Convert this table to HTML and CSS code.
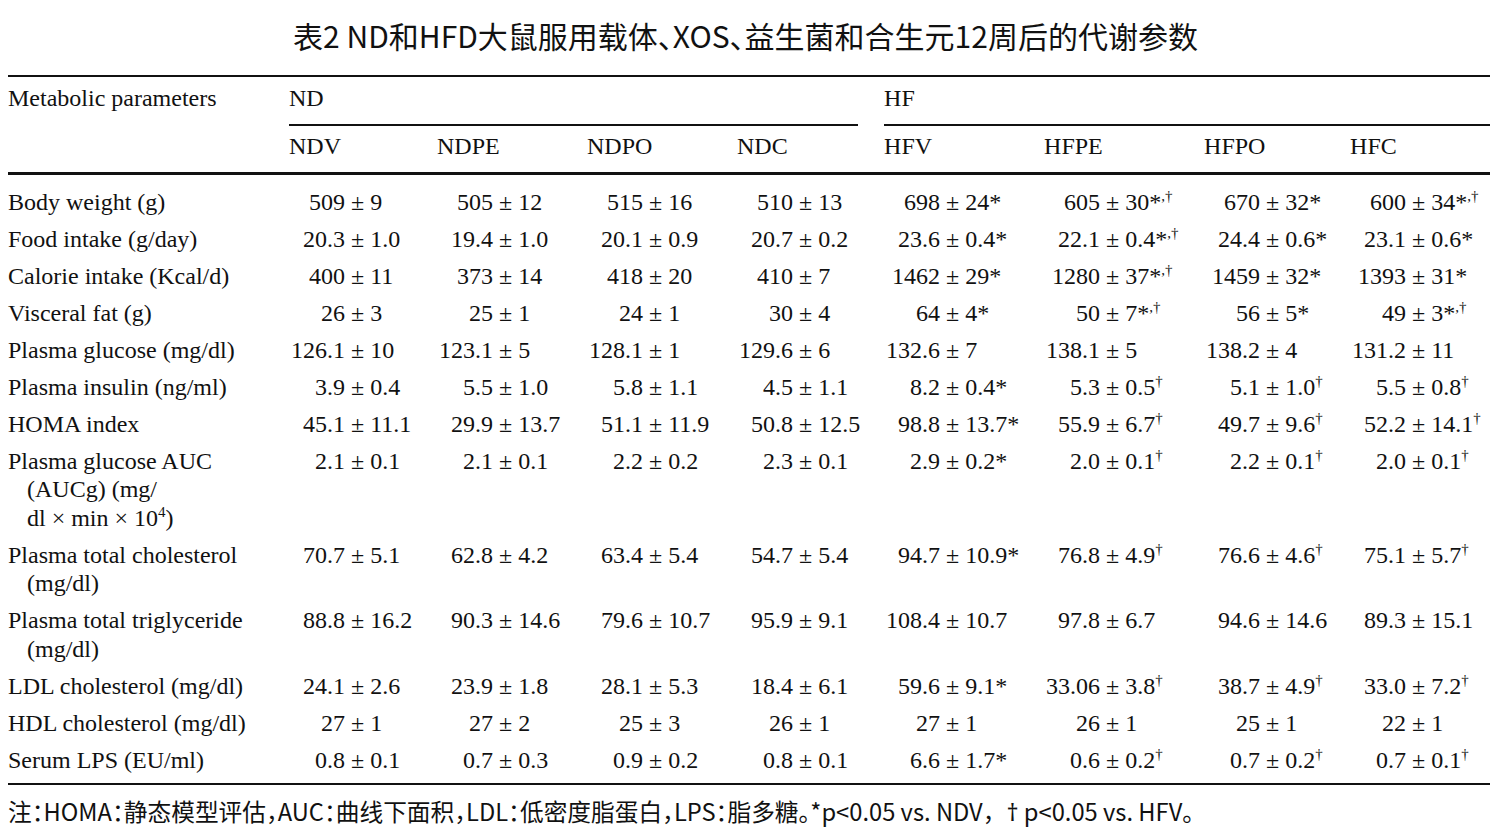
FILE: index.html
```html
<!DOCTYPE html>
<html lang="zh-CN">
<head>
<meta charset="utf-8">
<title>表2 代谢参数</title>
<link rel="stylesheet" href="styles.css">
</head>
<body>
<div class="page">
  <h1 class="title">表2 ND和HFD大鼠服用载体、XOS、益生菌和合生元12周后的代谢参数</h1>
  <table class="data">
    <colgroup>
      <col class="c-label">
      <col class="c-ndv"><col class="c-ndpe"><col class="c-ndpo"><col class="c-ndc">
      <col class="c-hfv"><col class="c-hfpe"><col class="c-hfpo"><col class="c-hfc">
    </colgroup>
    <thead>
      <tr class="h1">
        <th rowspan="2" class="lab-head">Metabolic parameters</th>
        <th colspan="4" class="grp"><div class="grp-label nd">ND</div></th>
        <th colspan="4" class="grp"><div class="grp-label">HF</div></th>
      </tr>
      <tr class="h2">
        <th>NDV</th><th>NDPE</th><th>NDPO</th><th>NDC</th>
        <th>HFV</th><th>HFPE</th><th>HFPO</th><th>HFC</th>
      </tr>
    </thead>
    <tbody>
      <tr>
        <td class="lab">Body weight (g)</td>
        <td><span class="n">509</span> ± 9</td>
        <td><span class="n">505</span> ± 12</td>
        <td><span class="n">515</span> ± 16</td>
        <td><span class="n">510</span> ± 13</td>
        <td><span class="n">698</span> ± 24*</td>
        <td><span class="n">605</span> ± 30*<sup>,†</sup></td>
        <td><span class="n">670</span> ± 32*</td>
        <td><span class="n">600</span> ± 34*<sup>,†</sup></td>
      </tr>
      <tr>
        <td class="lab">Food intake (g/day)</td>
        <td><span class="n">20.3</span> ± 1.0</td>
        <td><span class="n">19.4</span> ± 1.0</td>
        <td><span class="n">20.1</span> ± 0.9</td>
        <td><span class="n">20.7</span> ± 0.2</td>
        <td><span class="n">23.6</span> ± 0.4*</td>
        <td><span class="n">22.1</span> ± 0.4*<sup>,†</sup></td>
        <td><span class="n">24.4</span> ± 0.6*</td>
        <td><span class="n">23.1</span> ± 0.6*</td>
      </tr>
      <tr>
        <td class="lab">Calorie intake (Kcal/d)</td>
        <td><span class="n">400</span> ± 11</td>
        <td><span class="n">373</span> ± 14</td>
        <td><span class="n">418</span> ± 20</td>
        <td><span class="n">410</span> ± 7</td>
        <td><span class="n">1462</span> ± 29*</td>
        <td><span class="n">1280</span> ± 37*<sup>,†</sup></td>
        <td><span class="n">1459</span> ± 32*</td>
        <td><span class="n">1393</span> ± 31*</td>
      </tr>
      <tr>
        <td class="lab">Visceral fat (g)</td>
        <td><span class="n">26</span> ± 3</td>
        <td><span class="n">25</span> ± 1</td>
        <td><span class="n">24</span> ± 1</td>
        <td><span class="n">30</span> ± 4</td>
        <td><span class="n">64</span> ± 4*</td>
        <td><span class="n">50</span> ± 7*<sup>,†</sup></td>
        <td><span class="n">56</span> ± 5*</td>
        <td><span class="n">49</span> ± 3*<sup>,†</sup></td>
      </tr>
      <tr>
        <td class="lab">Plasma glucose (mg/dl)</td>
        <td><span class="n">126.1</span> ± 10</td>
        <td><span class="n">123.1</span> ± 5</td>
        <td><span class="n">128.1</span> ± 1</td>
        <td><span class="n">129.6</span> ± 6</td>
        <td><span class="n">132.6</span> ± 7</td>
        <td><span class="n">138.1</span> ± 5</td>
        <td><span class="n">138.2</span> ± 4</td>
        <td><span class="n">131.2</span> ± 11</td>
      </tr>
      <tr>
        <td class="lab">Plasma insulin (ng/ml)</td>
        <td><span class="n">3.9</span> ± 0.4</td>
        <td><span class="n">5.5</span> ± 1.0</td>
        <td><span class="n">5.8</span> ± 1.1</td>
        <td><span class="n">4.5</span> ± 1.1</td>
        <td><span class="n">8.2</span> ± 0.4*</td>
        <td><span class="n">5.3</span> ± 0.5<sup>†</sup></td>
        <td><span class="n">5.1</span> ± 1.0<sup>†</sup></td>
        <td><span class="n">5.5</span> ± 0.8<sup>†</sup></td>
      </tr>
      <tr>
        <td class="lab">HOMA index</td>
        <td><span class="n">45.1</span> ± 11.1</td>
        <td><span class="n">29.9</span> ± 13.7</td>
        <td><span class="n">51.1</span> ± 11.9</td>
        <td><span class="n">50.8</span> ± 12.5</td>
        <td><span class="n">98.8</span> ± 13.7*</td>
        <td><span class="n">55.9</span> ± 6.7<sup>†</sup></td>
        <td><span class="n">49.7</span> ± 9.6<sup>†</sup></td>
        <td><span class="n">52.2</span> ± 14.1<sup>†</sup></td>
      </tr>
      <tr>
        <td class="lab">Plasma glucose AUC<br>(AUCg) (mg/<br>dl × min × 10<sup>4</sup>)</td>
        <td><span class="n">2.1</span> ± 0.1</td>
        <td><span class="n">2.1</span> ± 0.1</td>
        <td><span class="n">2.2</span> ± 0.2</td>
        <td><span class="n">2.3</span> ± 0.1</td>
        <td><span class="n">2.9</span> ± 0.2*</td>
        <td><span class="n">2.0</span> ± 0.1<sup>†</sup></td>
        <td><span class="n">2.2</span> ± 0.1<sup>†</sup></td>
        <td><span class="n">2.0</span> ± 0.1<sup>†</sup></td>
      </tr>
      <tr>
        <td class="lab">Plasma total cholesterol<br>(mg/dl)</td>
        <td><span class="n">70.7</span> ± 5.1</td>
        <td><span class="n">62.8</span> ± 4.2</td>
        <td><span class="n">63.4</span> ± 5.4</td>
        <td><span class="n">54.7</span> ± 5.4</td>
        <td><span class="n">94.7</span> ± 10.9*</td>
        <td><span class="n">76.8</span> ± 4.9<sup>†</sup></td>
        <td><span class="n">76.6</span> ± 4.6<sup>†</sup></td>
        <td><span class="n">75.1</span> ± 5.7<sup>†</sup></td>
      </tr>
      <tr>
        <td class="lab">Plasma total triglyceride<br>(mg/dl)</td>
        <td><span class="n">88.8</span> ± 16.2</td>
        <td><span class="n">90.3</span> ± 14.6</td>
        <td><span class="n">79.6</span> ± 10.7</td>
        <td><span class="n">95.9</span> ± 9.1</td>
        <td><span class="n">108.4</span> ± 10.7</td>
        <td><span class="n">97.8</span> ± 6.7</td>
        <td><span class="n">94.6</span> ± 14.6</td>
        <td><span class="n">89.3</span> ± 15.1</td>
      </tr>
      <tr>
        <td class="lab">LDL cholesterol (mg/dl)</td>
        <td><span class="n">24.1</span> ± 2.6</td>
        <td><span class="n">23.9</span> ± 1.8</td>
        <td><span class="n">28.1</span> ± 5.3</td>
        <td><span class="n">18.4</span> ± 6.1</td>
        <td><span class="n">59.6</span> ± 9.1*</td>
        <td><span class="n">33.06</span> ± 3.8<sup>†</sup></td>
        <td><span class="n">38.7</span> ± 4.9<sup>†</sup></td>
        <td><span class="n">33.0</span> ± 7.2<sup>†</sup></td>
      </tr>
      <tr>
        <td class="lab">HDL cholesterol (mg/dl)</td>
        <td><span class="n">27</span> ± 1</td>
        <td><span class="n">27</span> ± 2</td>
        <td><span class="n">25</span> ± 3</td>
        <td><span class="n">26</span> ± 1</td>
        <td><span class="n">27</span> ± 1</td>
        <td><span class="n">26</span> ± 1</td>
        <td><span class="n">25</span> ± 1</td>
        <td><span class="n">22</span> ± 1</td>
      </tr>
      <tr>
        <td class="lab">Serum LPS (EU/ml)</td>
        <td><span class="n">0.8</span> ± 0.1</td>
        <td><span class="n">0.7</span> ± 0.3</td>
        <td><span class="n">0.9</span> ± 0.2</td>
        <td><span class="n">0.8</span> ± 0.1</td>
        <td><span class="n">6.6</span> ± 1.7*</td>
        <td><span class="n">0.6</span> ± 0.2<sup>†</sup></td>
        <td><span class="n">0.7</span> ± 0.2<sup>†</sup></td>
        <td><span class="n">0.7</span> ± 0.1<sup>†</sup></td>
      </tr>
    </tbody>
  </table>
  <p class="note">注：HOMA：静态模型评估，AUC：曲线下面积，LDL：低密度脂蛋白，LPS：脂多糖。*p&lt;0.05 vs. NDV<span class="full">，</span><span class="dag">†</span> p&lt;0.05 vs. HFV。</p>
</div>
</body>
</html>
```
FILE: styles.css
```css
html, body {
  margin: 0;
  padding: 0;
  background: #ffffff;
}

.page {
  width: 1482px;
  padding: 0 1px 0 8px;
  color: #111111;
}

.title {
  margin: 0 0 20px -8px;
  padding-top: 15px;
  width: 1491px;
  text-align: center;
  font-family: "Noto Sans CJK SC", "Noto Sans", sans-serif;
  font-weight: 400;
  font-size: 30px;
  line-height: 40px;
  font-feature-settings: "halt";
  color: #111111;
}

.data {
  width: 1482px;
  table-layout: fixed;
  border-collapse: collapse;
  border-top: 2px solid #111111;
  border-bottom: 2px solid #111111;
  font-family: "Liberation Serif", "Times New Roman", serif;
  font-size: 24px;
  line-height: 28.5px;
  color: #111111;
}

.c-label { width: 281px; }
.c-ndv { width: 148px; }
.c-ndpe { width: 150px; }
.c-ndpo { width: 150px; }
.c-ndc { width: 147px; }
.c-hfv { width: 160px; }
.c-hfpe { width: 160px; }
.c-hfpo { width: 146px; }
.c-hfc { width: 140px; }

.data thead {
  border-bottom: 3px solid #111111;
}

.data th {
  font-weight: 400;
  text-align: left;
  vertical-align: top;
  padding: 0;
  white-space: nowrap;
}

.h1 .lab-head {
  padding-top: 7px;
}

.h1 .grp {
  padding: 0;
}

.grp-label {
  padding: 7px 0 11.5px;
  border-bottom: 2px solid #111111;
}

.grp-label.nd {
  margin-right: 26px;
}

.h2 th {
  padding: 6px 0 11.5px;
}

.data td {
  padding: 4.25px 0;
  vertical-align: top;
  white-space: nowrap;
}

.data tbody tr:first-child td {
  padding-top: 12.75px;
}

.data tbody tr:last-child td {
  padding-bottom: 8.75px;
}

.data td.lab {
  padding-left: 19px;
  text-indent: -19px;
  white-space: normal;
}

.n {
  display: inline-block;
  width: 56px;
  text-align: right;
}

sup {
  font-size: 15px;
  line-height: 0;
  vertical-align: 9px;
}

.note {
  margin: 10px 0 0;
  font-family: "Noto Sans CJK SC", "Noto Sans", sans-serif;
  font-size: 23.7px;
  line-height: 32px;
  font-feature-settings: "halt";
  color: #111111;
  white-space: nowrap;
}

.note .full {
  font-feature-settings: normal;
}

.note .dag {
  font-family: "Noto Sans", sans-serif;
}
```
